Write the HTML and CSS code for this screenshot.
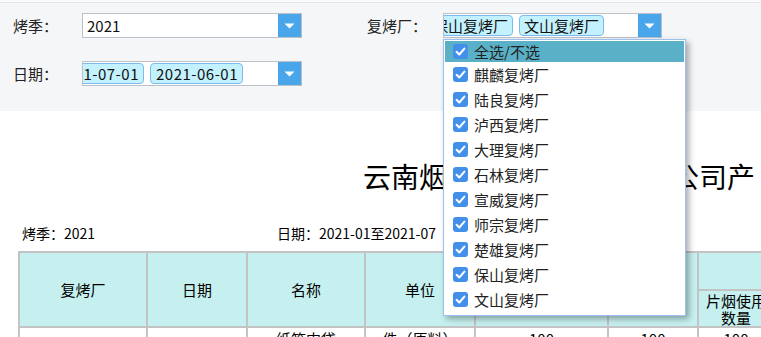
FILE: index.html
```html
<!DOCTYPE html>
<html lang="zh-CN">
<head>
<meta charset="utf-8">
<title>复烤厂产品使用情况</title>
<link rel="stylesheet" href="styles.css">
</head>
<body>
<div class="topline"></div>
<div class="filters">
  <div class="row">
    <div class="field">
      <span class="lbl">烤季：</span>
      <div class="combo">
        <div class="value">2021</div>
        <span class="btn"><svg width="11" height="6" viewBox="0 0 11 6"><path d="M0.5 0.5H10.5L5.5 5.5Z" fill="#fff"/></svg></span>
      </div>
    </div>
    <div class="field field2">
      <span class="lbl lbl2">复烤厂：</span>
      <div class="combo combo2">
        <div class="tags">
          <span class="tag">保山复烤厂</span>
          <span class="tag">文山复烤厂</span>
        </div>
        <div class="spacer"></div>
        <span class="btn"><svg width="11" height="6" viewBox="0 0 11 6"><path d="M0.5 0.5H10.5L5.5 5.5Z" fill="#fff"/></svg></span>
        <div class="panel">
          <div class="item first"><span class="cb"><svg width="15" height="15" viewBox="0 0 15 15"><path d="M3.6 7.8 6.3 10.5 11.4 4.6" fill="none" stroke="#fff" stroke-width="2" stroke-linecap="round" stroke-linejoin="round"/></svg></span>全选/不选</div>
          <div class="item"><span class="cb"><svg width="15" height="15" viewBox="0 0 15 15"><path d="M3.6 7.8 6.3 10.5 11.4 4.6" fill="none" stroke="#fff" stroke-width="2" stroke-linecap="round" stroke-linejoin="round"/></svg></span>麒麟复烤厂</div>
          <div class="item"><span class="cb"><svg width="15" height="15" viewBox="0 0 15 15"><path d="M3.6 7.8 6.3 10.5 11.4 4.6" fill="none" stroke="#fff" stroke-width="2" stroke-linecap="round" stroke-linejoin="round"/></svg></span>陆良复烤厂</div>
          <div class="item"><span class="cb"><svg width="15" height="15" viewBox="0 0 15 15"><path d="M3.6 7.8 6.3 10.5 11.4 4.6" fill="none" stroke="#fff" stroke-width="2" stroke-linecap="round" stroke-linejoin="round"/></svg></span>泸西复烤厂</div>
          <div class="item"><span class="cb"><svg width="15" height="15" viewBox="0 0 15 15"><path d="M3.6 7.8 6.3 10.5 11.4 4.6" fill="none" stroke="#fff" stroke-width="2" stroke-linecap="round" stroke-linejoin="round"/></svg></span>大理复烤厂</div>
          <div class="item"><span class="cb"><svg width="15" height="15" viewBox="0 0 15 15"><path d="M3.6 7.8 6.3 10.5 11.4 4.6" fill="none" stroke="#fff" stroke-width="2" stroke-linecap="round" stroke-linejoin="round"/></svg></span>石林复烤厂</div>
          <div class="item"><span class="cb"><svg width="15" height="15" viewBox="0 0 15 15"><path d="M3.6 7.8 6.3 10.5 11.4 4.6" fill="none" stroke="#fff" stroke-width="2" stroke-linecap="round" stroke-linejoin="round"/></svg></span>宣威复烤厂</div>
          <div class="item"><span class="cb"><svg width="15" height="15" viewBox="0 0 15 15"><path d="M3.6 7.8 6.3 10.5 11.4 4.6" fill="none" stroke="#fff" stroke-width="2" stroke-linecap="round" stroke-linejoin="round"/></svg></span>师宗复烤厂</div>
          <div class="item"><span class="cb"><svg width="15" height="15" viewBox="0 0 15 15"><path d="M3.6 7.8 6.3 10.5 11.4 4.6" fill="none" stroke="#fff" stroke-width="2" stroke-linecap="round" stroke-linejoin="round"/></svg></span>楚雄复烤厂</div>
          <div class="item"><span class="cb"><svg width="15" height="15" viewBox="0 0 15 15"><path d="M3.6 7.8 6.3 10.5 11.4 4.6" fill="none" stroke="#fff" stroke-width="2" stroke-linecap="round" stroke-linejoin="round"/></svg></span>保山复烤厂</div>
          <div class="item"><span class="cb"><svg width="15" height="15" viewBox="0 0 15 15"><path d="M3.6 7.8 6.3 10.5 11.4 4.6" fill="none" stroke="#fff" stroke-width="2" stroke-linecap="round" stroke-linejoin="round"/></svg></span>文山复烤厂</div>
        </div>
      </div>
    </div>
  </div>
  <div class="row row2">
    <div class="field">
      <span class="lbl">日期：</span>
      <div class="combo">
        <div class="tags">
          <span class="tag num">2021-07-01</span>
          <span class="tag num">2021-06-01</span>
        </div>
        <div class="spacer"></div>
        <span class="btn"><svg width="11" height="6" viewBox="0 0 11 6"><path d="M0.5 0.5H10.5L5.5 5.5Z" fill="#fff"/></svg></span>
      </div>
    </div>
  </div>
</div>

<div class="report">
  <div class="title">云南烟叶复烤有限责任总公司产（辅）品使用情况统计表</div>
  <div class="summary">
    <span class="sum1">烤季：2021</span>
    <span class="sum2">日期：2021-01至2021-07</span>
  </div>
  <table class="grid">
    <colgroup>
      <col class="c1"><col class="c2"><col class="c3"><col class="c4"><col class="c5"><col class="c6"><col class="c7"><col class="c7"><col class="c7">
    </colgroup>
    <thead>
      <tr class="r1">
        <th rowspan="2">复烤厂</th>
        <th rowspan="2">日期</th>
        <th rowspan="2">名称</th>
        <th rowspan="2">单位</th>
        <th rowspan="2">计划数量</th>
        <th rowspan="2">库存</th>
        <th colspan="3"></th>
      </tr>
      <tr class="r2">
        <th>片烟使用数量</th>
        <th>烟梗使用数量</th>
        <th>合计</th>
      </tr>
    </thead>
    <tbody>
      <tr class="r3">
        <td></td>
        <td></td>
        <td>纸箱内袋</td>
        <td>件（原料）</td>
        <td>100</td>
        <td>100</td>
        <td>100</td>
        <td>100</td>
        <td>100</td>
      </tr>
    </tbody>
  </table>
</div>
</body>
</html>
```

FILE: styles.css
```css
html, body {
  margin: 0;
  padding: 0;
  overflow: hidden;
  background: #ffffff;
}

body {
  font-family: "Noto Sans CJK SC", "Noto Sans", sans-serif;
  color: #1a1a1a;
}

.topline {
  height: 2px;
  background: #fbfbfc;
}

.filters {
  background: #f5f6f8;
  border-top: 1px solid #e4e6ea;
  height: 109px;
  box-sizing: border-box;
  padding: 10px 0 0 13px;
}

.row {
  display: flex;
  align-items: center;
  height: 25px;
}

.row2 {
  margin-top: 23px;
}

.field {
  display: flex;
  align-items: center;
}

.field2 {
  margin-left: 65px;
}

.lbl {
  width: 69px;
  font-size: 15px;
  line-height: 25px;
  color: #222;
}

.lbl2 {
  width: 76px;
}

.combo {
  position: relative;
  width: 220px;
  height: 25px;
  box-sizing: border-box;
  border: 1px solid #bcc0cb;
  background: #fff;
  display: flex;
  align-items: center;
}

.combo2 {
  width: 219px;
}

.value {
  flex: 1;
  padding-left: 4px;
  font-size: 15px;
  line-height: 23px;
  color: #111;
}

.btn {
  width: 23px;
  height: 23px;
  background: #4aa6ea;
  display: flex;
  align-items: center;
  justify-content: center;
  flex-shrink: 0;
}

.btn svg {
  display: block;
}

.tags {
  width: 160px;
  height: 23px;
  overflow: hidden;
  display: flex;
  justify-content: flex-end;
  align-items: center;
  flex-shrink: 0;
}

.tag {
  flex-shrink: 0;
  height: 21px;
  box-sizing: border-box;
  border: 1px solid #7dbbef;
  border-radius: 4px;
  background: #c3f1fd;
  padding: 0 4px;
  font-size: 15px;
  line-height: 19px;
  color: #111;
  white-space: nowrap;
}

.tag.num {
  padding: 0 4px 0 5px;
  letter-spacing: 0.5px;
}

.tag + .tag {
  margin-left: 6px;
}

.spacer {
  flex: 1;
}

.panel {
  position: absolute;
  left: -1px;
  top: 25px;
  width: 243px;
  box-sizing: border-box;
  border: 1px solid #9dc1ee;
  background: #fff;
  padding: 1px 1px 3px;
  box-shadow: 3px 3px 6px rgba(0, 0, 0, 0.33);
  z-index: 5;
}

.item {
  height: 25px;
  display: flex;
  align-items: center;
  padding-left: 8px;
  font-size: 15px;
  color: #222;
  white-space: nowrap;
}

.item.first {
  height: 21px;
  background: #5ab1c7;
}

.cb {
  width: 15px;
  height: 15px;
  border-radius: 3px;
  background: #4290ea;
  margin-right: 6px;
  flex-shrink: 0;
}

.cb svg {
  display: block;
}

.report {
  background: #fff;
}

.title {
  margin-top: 45px;
  padding-left: 363px;
  font-size: 28px;
  line-height: 40px;
  color: #000;
  white-space: nowrap;
}

.summary {
  margin-top: 28px;
  padding-left: 22px;
  font-size: 14px;
  line-height: 18px;
  color: #000;
  display: flex;
  white-space: nowrap;
}

.sum1 {
  width: 255px;
}

.grid {
  margin: 9px 0 0 18px;
  border-collapse: separate;
  border-spacing: 0;
  table-layout: fixed;
  width: 909px;
  border-top: 2px solid #c3c3c3;
  border-left: 2px solid #c3c3c3;
  font-size: 15px;
  line-height: 17px;
  color: #000;
}

.c1 { width: 128px; }
.c2 { width: 100px; }
.c3 { width: 118px; }
.c4 { width: 110px; }
.c5 { width: 133px; }
.c6 { width: 90px; }
.c7 { width: 76px; }

.grid th,
.grid td {
  border-right: 2px solid #c3c3c3;
  border-bottom: 2px solid #c3c3c3;
  padding: 0 4px;
  text-align: center;
  font-weight: normal;
}

.grid th {
  background: #c6f0ef;
  vertical-align: middle;
}

.r1 { height: 38px; }
.r2 { height: 37px; }

.grid td {
  vertical-align: top;
  padding-top: 2px;
  height: 40px;
}
```
